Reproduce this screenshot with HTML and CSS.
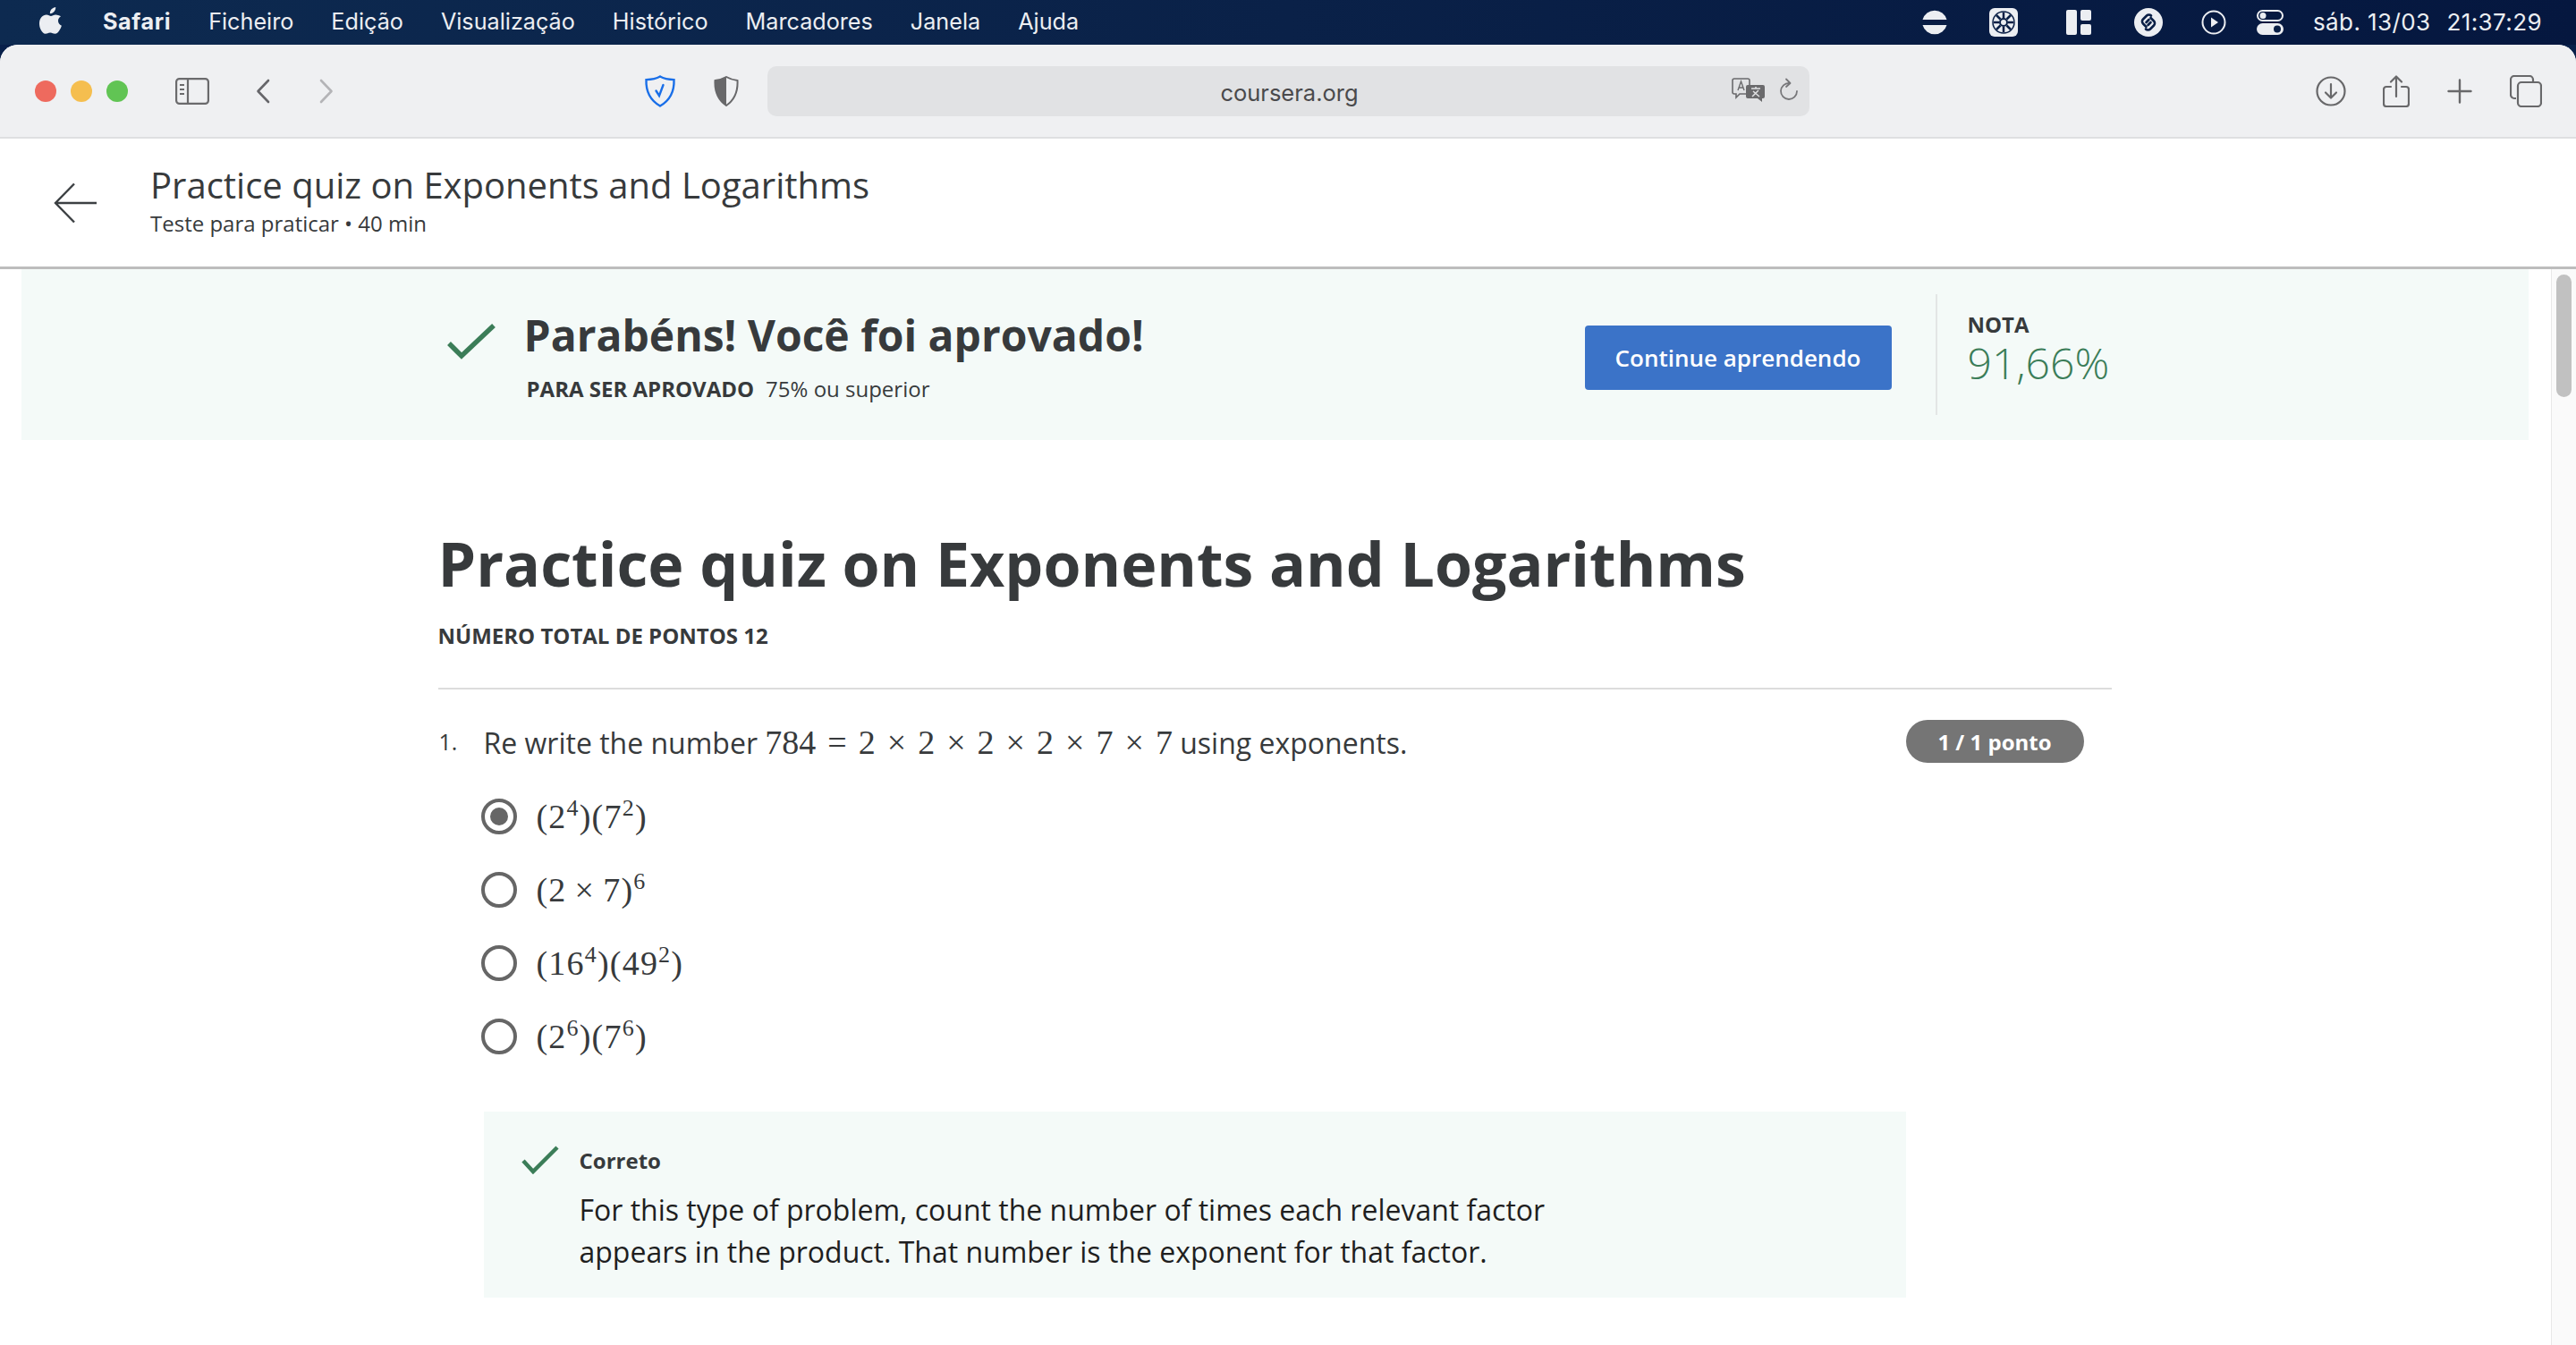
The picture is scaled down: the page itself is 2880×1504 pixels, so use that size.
FILE: index.html
```html
<!DOCTYPE html>
<html lang="pt-PT">
<head>
  <meta charset="UTF-8">
  <title>Practice quiz on Exponents and Logarithms</title>
  <link rel="stylesheet" href="styles.css">
</head>
<body>
  <header class="menubar">
    <svg class="apple" viewBox="0 0 26 32"><path d="M18.2 1c.2 2-.6 3.700-1.700 5-1.100 1.300-2.900 2.300-4.600 2.100-.2-1.800.7-3.700 1.700-4.800C14.800 2 16.700 1.100 18.200 1zM24 11.200c-1.900 1.200-3 3-3 5.100 0 2.500 1.500 4.600 3.900 5.500-.6 1.800-1.400 3.500-2.500 5.100-1.400 2-2.800 3.900-5 3.900-2.100 0-2.800-1.300-5.200-1.300-2.500 0-3.300 1.300-5.300 1.300-2.100.1-3.700-2.100-5-4.100C-.2 23.400-1.300 16.100 2.500 12c1.400-1.500 3.400-2.400 5.400-2.500 2.100 0 3.900 1.400 5.100 1.400 1.200 0 3.300-1.700 5.700-1.500 1 .1 3.500.4 5.300 1.800z"/></svg>
    <nav class="menus">
      <a class="app">Safari</a>
      <a>Ficheiro</a>
      <a>Edição</a>
      <a>Visualização</a>
      <a>Histórico</a>
      <a>Marcadores</a>
      <a>Janela</a>
      <a>Ajuda</a>
    </nav>
    <div class="status">
      <svg class="st-disc" viewBox="0 0 30 30"><path d="M1.500 12a14 14 0 0 1 27 0zM1.500 18h27a14 14 0 0 1-27 0z"/></svg>
      <svg class="st-fan" viewBox="0 0 32 32"><rect width="32" height="32" rx="6"/><circle cx="16" cy="16" r="12" fill="none" stroke="#0a1f46" stroke-width="1.500"/><circle cx="16" cy="16" r="4" fill="none" stroke="#0a1f46" stroke-width="2"/><path d="M16 5v6M16 21v6M5 16h6M21 16h6M8 8l4.500 4.500M19.500 19.500 24 24M24 8l-4.500 4.500M12.500 19.500 8 24" stroke="#0a1f46" stroke-width="2.500"/></svg>
      <svg class="st-grid" viewBox="0 0 28 28"><rect width="12" height="28" rx="2"/><rect x="16" width="12" height="12" rx="2"/><rect x="16" y="16" width="12" height="12" rx="2"/></svg>
      <svg class="st-shazam" viewBox="0 0 32 32"><circle cx="16" cy="16" r="16"/><path d="M13.500 21 10 17.500a3.500 3.500 0 0 1 0-5l4-4a3.500 3.500 0 0 1 5 0M18.500 11 22 14.500a3.500 3.500 0 0 1 0 5l-4 4a3.500 3.500 0 0 1-5 0M13.500 16l3-3M18.500 16l-3 3" fill="none" stroke="#0a1f46" stroke-width="2.600" stroke-linecap="round"/></svg>
      <svg class="st-play" viewBox="0 0 28 28"><circle cx="14" cy="14" r="12.500" fill="none" stroke="#eceef2" stroke-width="2"/><path d="M11 8.500 19 14l-8 5.500z"/></svg>
      <svg class="st-ctrl" viewBox="0 0 30 28"><rect x="1" y="1" width="28" height="11" rx="5.500" fill="none" stroke="#eceef2" stroke-width="2"/><circle cx="7" cy="6.500" r="3.500"/><rect y="15" width="30" height="13" rx="6.500"/><circle cx="23" cy="21.500" r="4" fill="#0a1f46"/></svg>
      <span class="clock"><span>sáb. 13/03</span><span>21:37:29</span></span>
    </div>
  </header>

  <div class="window">
    <div class="toolbar">
      <div class="lights">
        <i class="light red"></i>
        <i class="light yellow"></i>
        <i class="light green"></i>
      </div>
      <svg class="tb-sidebar" viewBox="0 0 38 30" fill="none" stroke="#6a6a6c" stroke-width="2.200"><rect x="1.100" y="1.100" width="35.800" height="27.800" rx="3.500"/><path d="M14 1v28"/><path d="M5 8h5M5 13h5M5 18h5" stroke-width="2"/></svg>
      <svg class="tb-back" viewBox="0 0 16 28" fill="none" stroke="#66666a" stroke-width="2.600" stroke-linecap="round" stroke-linejoin="round"><path d="M14 2 2.500 14 14 26"/></svg>
      <svg class="tb-forward" viewBox="0 0 16 28" fill="none" stroke="#b4b4b7" stroke-width="2.600" stroke-linecap="round" stroke-linejoin="round"><path d="M2 2l11.500 12L2 26"/></svg>
      <svg class="tb-shield" viewBox="0 0 36 36" fill="none" stroke="#1a6fe8" stroke-width="2.400"><path d="M18 1.500c4 2.300 9 3.400 15.500 3.600.5 12.500-3.500 22.500-15.500 29.400C6 27.600 2 17.600 2.500 5.100 9 4.900 14 3.800 18 1.500z"/><path d="M13.500 17.500l3.500 5.500 4.500-12" stroke-linecap="round"/></svg>
      <svg class="tb-halfshield" viewBox="0 0 28 34"><path d="M14 1c3.500 2 7 3.200 12.500 4 .6 11.500-2.500 21-12.500 28C4 26 .9 16.500 1.500 5 7 4.200 10.500 3 14 1z" fill="none" stroke="#68686a" stroke-width="2"/><path d="M14 1C10.500 3 7 4.200 1.500 5 .9 16.500 4 26 14 33z" fill="#68686a"/></svg>
      <div class="urlbar">
        <span class="url">coursera.org</span>
        <div class="url-tools">
          <svg class="tb-translate" viewBox="0 0 38 28"><path d="M3 1h15a2 2 0 0 1 2 2v13a2 2 0 0 1-2 2H9l-4 4v-4H3a2 2 0 0 1-2-2V3a2 2 0 0 1 2-2z" fill="#e1e2e4" stroke="#6a6a6c" stroke-width="1.600"/><path d="M7 14l3.500-10L14 14M8.200 11h4.600" fill="none" stroke="#6a6a6c" stroke-width="1.400"/><path d="M18 8h17a2 2 0 0 1 2 2v11a2 2 0 0 1-2 2h-1v4l-5-4H18a2 2 0 0 1-2-2V10a2 2 0 0 1 2-2z" fill="#6a6a6c"/><path d="M22 12h10M27 10v2M23 21l7-7M24 15l7 6" fill="none" stroke="#e1e2e4" stroke-width="1.500"/></svg>
          <svg class="tb-reload" viewBox="0 0 22 28" fill="none" stroke="#77777a" stroke-width="1.800" stroke-linecap="round" stroke-linejoin="round"><path d="M11.500 6A9 9 0 1 0 20 15"/><path d="M8 1.500 12.500 6 8 10"/></svg>
        </div>
      </div>
      <div class="tb-right">
        <svg class="tb-download" viewBox="0 0 34 34" fill="none" stroke="#68686a" stroke-width="2.200" stroke-linecap="round" stroke-linejoin="round"><circle cx="17" cy="17" r="15.500"/><path d="M17 9v15M11 18.500l6 6 6-6"/></svg>
        <svg class="tb-share" viewBox="0 0 30 36" fill="none" stroke="#68686a" stroke-width="2.200" stroke-linecap="round" stroke-linejoin="round"><path d="M9 13H4a3 3 0 0 0-3 3v16a3 3 0 0 0 3 3h22a3 3 0 0 0 3-3V16a3 3 0 0 0-3-3h-5"/><path d="M15 24V2M9 7.500 15 1.500l6 6"/></svg>
        <svg class="tb-plus" viewBox="0 0 28 28" stroke="#68686a" stroke-width="2.400" stroke-linecap="round"><path d="M14 1.500v25M1.500 14h25"/></svg>
        <svg class="tb-tabs" viewBox="0 0 36 36" fill="none" stroke="#68686a" stroke-width="2.200"><path d="M7 26H5a4 4 0 0 1-4-4V5a4 4 0 0 1 4-4h17a4 4 0 0 1 4 4v2"/><rect x="9" y="8" width="26" height="27" rx="4"/></svg>
      </div>
    </div>

    <div class="course-head">
      <svg class="back-arrow" viewBox="0 0 48 46" fill="none" stroke="#3c4043" stroke-width="2.400"><path d="M23 1.500 2 23l21 21.500M2 23h46"/></svg>
      <div class="course-info">
        <h1 class="course-title">Practice quiz on Exponents and Logarithms</h1>
        <p class="course-meta">Teste para praticar • 40 min</p>
      </div>
    </div>

    <div class="page">
      <main class="scroller">
        <section class="banner">
          <div class="banner-inner">
            <svg class="banner-check" viewBox="0 0 54 40" fill="none" stroke="#3b7d58" stroke-width="5.500"><path d="M2 22l14 14L52 2"/></svg>
            <div class="banner-text">
              <h2>Parabéns! Você foi aprovado!</h2>
              <p><b>PARA SER APROVADO</b><span>75% ou superior</span></p>
            </div>
            <button class="continue">Continue aprendendo</button>
            <div class="grade">
              <div class="grade-label">NOTA</div>
              <div class="grade-value">91,66%</div>
            </div>
          </div>
        </section>

        <section class="quiz">
          <h2 class="quiz-title">Practice quiz on Exponents and Logarithms</h2>
          <div class="quiz-total">NÚMERO TOTAL DE PONTOS 12</div>

          <div class="question">
            <span class="q-num">1.</span>
            <p class="q-text">Re write the number <span class="math">784<i class="op">=</i>2<i class="op">×</i>2<i class="op">×</i>2<i class="op">×</i>2<i class="op">×</i>7<i class="op">×</i>7</span> using exponents.</p>
            <span class="pill">1 / 1 ponto</span>
          </div>

          <ul class="options">
            <li><i class="radio checked"></i><span class="math">(2<sup>4</sup>)(7<sup>2</sup>)</span></li>
            <li><i class="radio"></i><span class="math">(2<i class="op">×</i>7)<sup>6</sup></span></li>
            <li><i class="radio"></i><span class="math">(16<sup>4</sup>)(49<sup>2</sup>)</span></li>
            <li><i class="radio"></i><span class="math">(2<sup>6</sup>)(7<sup>6</sup>)</span></li>
          </ul>

          <div class="feedback">
            <svg class="feedback-check" viewBox="0 0 42 32" fill="none" stroke="#3b7d58" stroke-width="4.500"><path d="M2 17l11 12L40 2"/></svg>
            <div>
              <div class="feedback-label">Correto</div>
              <p class="feedback-text">For this type of problem, count the number of times each relevant factor appears in the product. That number is the exponent for that factor.</p>
            </div>
          </div>
        </section>
      </main>
      <div class="scrollbar"><div class="thumb"></div></div>
    </div>
  </div>
</body>
</html>
```

FILE: styles.css
```css
html, body {
  margin: 0;
  height: 100%;
}
body {
  width: 2880px;
  height: 1504px;
  overflow: hidden;
  display: flex;
  flex-direction: column;
  background: #08204a;
  font-family: "Open Sans", Arial, sans-serif;
  color: #373a3c;
}
svg {
  display: block;
  flex: none;
}

/* mac menu bar */
.menubar {
  height: 50px;
  flex: none;
  display: flex;
  align-items: center;
  padding: 0 38px 0 44px;
  background: linear-gradient(90deg, #0d2a50, #0a2148 50%, #05173f);
  color: #eceef2;
  font-family: Inter, "Liberation Sans", sans-serif;
  font-size: 25.200px;
}
.apple {
  width: 26px;
  height: 32px;
  fill: #eceef2;
  margin-top: -4px;
}
.menus {
  display: flex;
  gap: 42px;
  margin-left: 45px;
  margin-top: -2px;
}
.menus .app {
  font-weight: 700;
  letter-spacing: 0.6px;
}
.status {
  margin-left: auto;
  display: flex;
  align-items: center;
  fill: #eceef2;
}
.st-disc { width: 30px; height: 30px; }
.st-fan { width: 32px; height: 32px; margin-left: 46px; }
.st-grid { width: 28px; height: 28px; margin-left: 54px; }
.st-shazam { width: 32px; height: 32px; margin-left: 48px; }
.st-play { width: 28px; height: 28px; margin-left: 43px; }
.st-ctrl { width: 30px; height: 28px; margin-left: 34px; }
.clock {
  display: flex;
  gap: 18px;
  margin-left: 33px;
  margin-top: -2px;
  font-size: 26px;
  letter-spacing: 0.4px;
  white-space: nowrap;
}

/* browser window */
.window {
  flex: 1;
  display: flex;
  flex-direction: column;
  background: #fff;
  border-radius: 20px 20px 0 0;
  overflow: hidden;
}
.toolbar {
  flex: none;
  height: 103px;
  display: flex;
  align-items: center;
  padding: 0 38px 0 39px;
  background: #eff0f2;
  border-bottom: 2px solid #dedfe1;
}
.lights {
  display: flex;
  gap: 16px;
}
.light {
  display: block;
  width: 24px;
  height: 24px;
  border-radius: 50%;
}
.red { background: #ee6a5e; }
.yellow { background: #f5be4f; }
.green { background: #61c454; }
.tb-sidebar { width: 38px; height: 30px; margin-left: 53px; }
.tb-back { width: 16px; height: 28px; margin-left: 52px; }
.tb-forward { width: 16px; height: 28px; margin-left: 55px; }
.tb-shield { width: 36px; height: 36px; margin-left: 347px; }
.tb-halfshield { width: 28px; height: 34px; margin-left: 42px; }
.urlbar {
  width: 1165px;
  height: 56px;
  margin-left: 32px;
  display: flex;
  align-items: center;
  justify-content: center;
  position: relative;
  background: #e1e2e4;
  border-radius: 10px;
}
.url {
  font-family: Inter, "Liberation Sans", sans-serif;
  font-size: 25.500px;
  color: #4a4a4c;
  margin: 3px 0 0 2px;
}
.url-tools {
  position: absolute;
  right: 12px;
  top: 13px;
  display: flex;
  align-items: center;
  gap: 15px;
}
.tb-translate { width: 38px; height: 28px; }
.tb-reload { width: 22px; height: 28px; }
.tb-right {
  margin-left: auto;
  display: flex;
  align-items: center;
}
.tb-download { width: 34px; height: 34px; }
.tb-share { width: 30px; height: 36px; margin-left: 41px; }
.tb-plus { width: 28px; height: 28px; margin-left: 42px; }
.tb-tabs { width: 36px; height: 36px; margin-left: 42px; }

/* course header */
.course-head {
  height: 143px;
  flex: none;
  display: flex;
  align-items: center;
  padding-left: 60px;
  border-bottom: 3px solid #bdbdbd;
  background: #fff;
}
.back-arrow {
  width: 48px;
  height: 46px;
  margin-right: 60px;
}
.course-info {
  margin-top: -6px;
}
.course-title {
  margin: 0;
  font-size: 40px;
  line-height: 52px;
  font-weight: 400;
}
.course-meta {
  margin: 0;
  font-size: 24px;
  line-height: 34px;
}

/* page body */
.page {
  flex: 1;
  display: flex;
  min-height: 0;
}
.scroller {
  flex: 1;
  overflow: hidden;
  padding: 0 25px 0 24px;
}
.scrollbar {
  width: 28px;
  border-left: 1px solid #e8e8e8;
  background: #fafafa;
  padding: 6px 5px;
  box-sizing: border-box;
  flex: none;
}
.thumb {
  width: 17px;
  height: 137px;
  border-radius: 9px;
  background: #c1c1c1;
}

.banner {
  height: 191px;
  background: #f4faf8;
  display: flex;
  align-items: center;
}
.banner-inner {
  width: 1870px;
  margin: 0 auto;
  display: flex;
  align-items: center;
}
.banner-check {
  width: 54px;
  height: 40px;
  margin-left: 9px;
  margin-top: -30px;
}
.banner-text {
  margin-left: 32px;
}
.banner-text h2 {
  margin: 0;
  font-size: 48px;
  line-height: 64px;
  font-weight: 700;
}
.banner-text p {
  margin: 12px 0 0 3px;
  font-size: 24px;
  line-height: 32px;
  display: flex;
  gap: 13px;
}
.continue {
  margin-left: auto;
  margin-top: 6px;
  width: 343px;
  height: 72px;
  border: none;
  border-radius: 4px;
  background: #3b73c8;
  color: #fff;
  font-family: inherit;
  font-size: 26px;
  font-weight: 600;
}
.grade {
  width: 197px;
  height: 135px;
  margin-left: 49px;
  padding-left: 34px;
  box-sizing: border-box;
  border-left: 2px solid #e3e6e5;
}
.grade-label {
  margin-top: 18px;
  font-size: 24px;
  line-height: 32px;
  font-weight: 700;
}
.grade-value {
  font-size: 48px;
  line-height: 54px;
  font-weight: 350;
  color: #3b7d58;
}

.quiz {
  width: 1870px;
  margin: 0 auto;
}
.quiz-title {
  margin: 90px 0 0 -1px;
  font-size: 68px;
  line-height: 96px;
  font-weight: 700;
}
.quiz-total {
  margin: 17px 0 0 -1px;
  font-size: 24px;
  line-height: 32px;
  font-weight: 700;
  padding-bottom: 42px;
  border-bottom: 2px solid #dcdcdc;
}
.question {
  display: flex;
  align-items: center;
  margin-top: 34px;
  height: 50px;
  position: relative;
}
.q-num {
  width: 50px;
  font-size: 25px;
  margin-top: -2px;
}
.q-text {
  margin: 0;
  font-size: 32px;
}
.math {
  font-family: "Liberation Serif", serif;
  font-size: 38px;
}
.math sup {
  font-size: 26px;
  line-height: 0;
}
.op {
  font-style: normal;
  padding: 0 13px;
}
.pill {
  position: absolute;
  left: 1640px;
  top: 0;
  width: 199px;
  height: 48px;
  border-radius: 24px;
  background: #757575;
  color: #fff;
  font-size: 24px;
  font-weight: 700;
  display: flex;
  align-items: center;
  justify-content: center;
}
.options {
  list-style: none;
  margin: 17px 0 0 47px;
  padding: 0;
}
.options li {
  height: 82px;
  display: flex;
  align-items: center;
  gap: 22px;
}
.options .math {
  letter-spacing: 1.200px;
}
.options .op {
  padding: 0 9px;
}
.radio {
  width: 40px;
  height: 40px;
  box-sizing: border-box;
  border: 4px solid #666;
  border-radius: 50%;
  background: #fff;
  display: flex;
  align-items: center;
  justify-content: center;
}
.radio.checked::after {
  content: "";
  width: 20px;
  height: 20px;
  border-radius: 50%;
  background: #666;
}
.feedback {
  margin: 43px 0 0 50px;
  width: 1590px;
  height: 208px;
  box-sizing: border-box;
  padding: 38px 0 0 42px;
  background: #f4faf8;
  display: flex;
  gap: 23px;
}
.feedback-check {
  width: 42px;
  height: 32px;
}
.feedback-label {
  font-size: 24px;
  line-height: 34px;
  font-weight: 700;
}
.feedback-text {
  margin: 14px 0 0;
  width: 1120px;
  font-size: 32px;
  line-height: 47px;
  color: #1f1f1f;
}
```
